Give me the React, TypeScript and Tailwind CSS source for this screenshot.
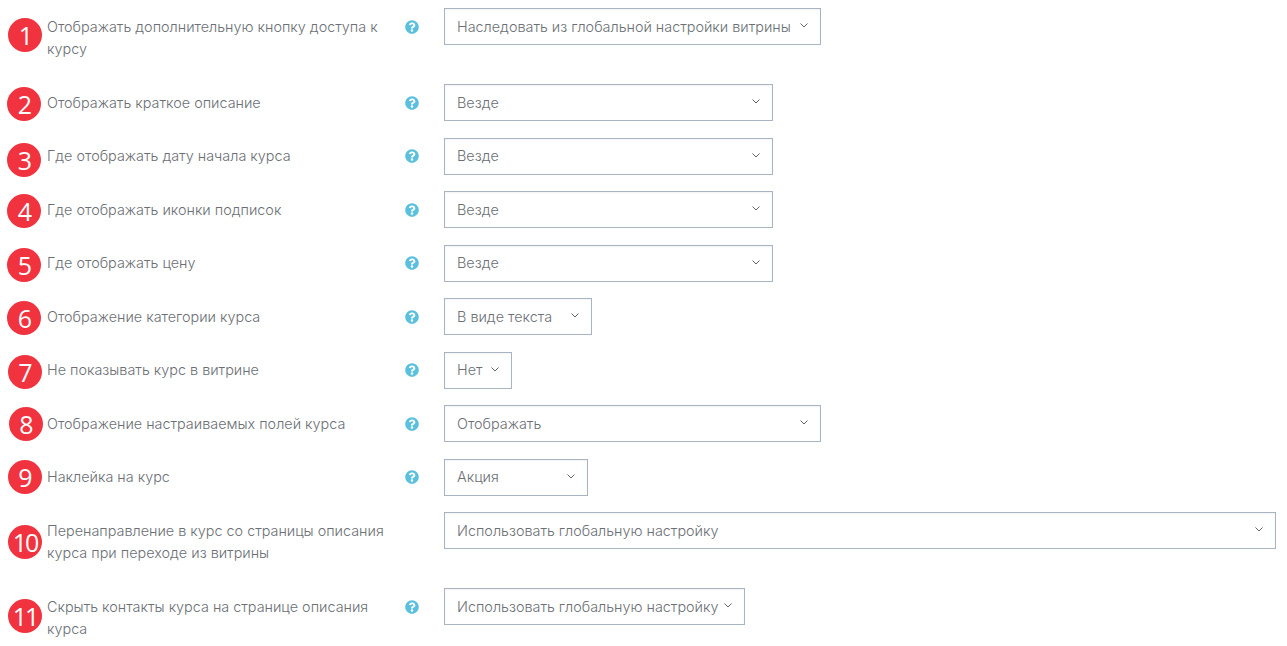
import React from 'react';
import { FaQuestionCircle } from 'react-icons/fa';

interface SettingRow {
  n: number;
  label: string;
  value: string;
  selectClass: string;
  badgeClass: string;
  help?: boolean;
  tall?: boolean;
}

const rows: SettingRow[] = [
  { n: 1, label: 'Отображать дополнительную кнопку доступа к курсу', value: 'Наследовать из глобальной настройки витрины', selectClass: 'w-[377px]', badgeClass: 'left-[8px] top-[10px]', help: true, tall: true },
  { n: 2, label: 'Отображать краткое описание', value: 'Везде', selectClass: 'w-[329px]', badgeClass: 'left-[7px] top-[3px]', help: true },
  { n: 3, label: 'Где отображать дату начала курса', value: 'Везде', selectClass: 'w-[329px]', badgeClass: 'left-[7px] top-[5px]', help: true },
  { n: 4, label: 'Где отображать иконки подписок', value: 'Везде', selectClass: 'w-[329px]', badgeClass: 'left-[7px] top-[3px]', help: true },
  { n: 5, label: 'Где отображать цену', value: 'Везде', selectClass: 'w-[329px]', badgeClass: 'left-[7px] top-[3px]', help: true },
  { n: 6, label: 'Отображение категории курса', value: 'В виде текста', selectClass: 'w-[148px]', badgeClass: 'left-[7px] top-[3px]', help: true },
  { n: 7, label: 'Не показывать курс в витрине', value: 'Нет', selectClass: 'w-[68px]', badgeClass: 'left-[7.5px] top-[3.5px]', help: true },
  { n: 8, label: 'Отображение настраиваемых полей курса', value: 'Отображать', selectClass: 'w-[377px]', badgeClass: 'left-[8.5px] top-[2px]', help: true },
  { n: 9, label: 'Наклейка на курс', value: 'Акция', selectClass: 'w-[144px]', badgeClass: 'left-[7.5px] top-[1.5px]', help: true },
  { n: 10, label: 'Перенаправление в курс со страницы описания курса при переходе из витрины', value: 'Использовать глобальную настройку', selectClass: 'w-[832px]', badgeClass: 'left-[8px] top-[13px]', tall: true },
  { n: 11, label: 'Скрыть контакты курса на странице описания курса', value: 'Использовать глобальную настройку', selectClass: 'w-[301px]', badgeClass: 'left-[8px] top-[11px]', help: true },
];

function Chevron() {
  return (
    <svg width="8" height="5" viewBox="0 0 8 5" fill="none" className="shrink-0 -mt-[2px]">
      <path d="M0.5 0.5l3.5 3.5 3.5-3.5" stroke="#5f6469" strokeWidth="1" />
    </svg>
  );
}

export default function App() {
  return (
    <div className="w-[1287px] h-[646px] overflow-hidden bg-white pt-2 font-['Inter',sans-serif] font-light text-[14.4px] leading-[22px] text-[#6c7075]">
      {rows.map((row) => (
        <div key={row.n} className={`relative flex items-start mb-[16.5px] ${row.tall ? 'min-h-[59.5px]' : ''}`}>
          <div className={`absolute ${row.badgeClass} w-[34px] h-[34px] rounded-full bg-[#f1333f] flex items-center justify-center text-white font-['Open_Sans',sans-serif] font-normal text-[25px] tracking-[-0.08em]`}>
            {row.n}
          </div>
          <div className="ml-[47px] w-[350px] pt-[7.75px] shrink-0">{row.label}</div>
          <div className="w-[47px] pl-[8px] pt-[11.75px] shrink-0">
            {row.help && <FaQuestionCircle className="w-[14px] h-[14px] text-[#5bc0de]" />}
          </div>
          <div className={`${row.selectClass} h-[37px] border border-[#a9b4c2] bg-white px-3 flex items-center justify-between shrink-0 shadow-[inset_0_1px_2px_rgba(0,0,0,0.05)]`}>
            <span className="whitespace-nowrap">{row.value}</span>
            <Chevron />
          </div>
        </div>
      ))}
    </div>
  );
}
